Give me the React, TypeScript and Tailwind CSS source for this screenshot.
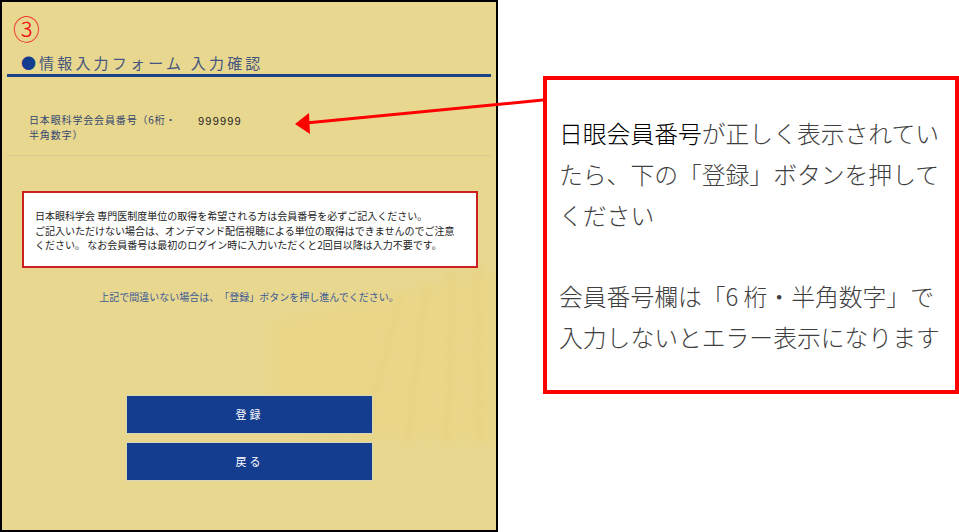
const jp = { fontFamily: '"Noto Sans CJK JP", sans-serif' }

const FormPanel = () => {
  return (
    <div className="relative h-[532px] w-[498px] shrink-0 overflow-hidden border-2 border-black bg-[#e8d78f] text-[10px]" style={jp}>
      {/* faint building photo behind the form */}
      <svg className="absolute inset-0 blur-[3px]" width="494" height="528" viewBox="0 0 494 528" fill="none">
        <path d="M270 320 L494 270 L494 440 L270 430 Z" fill="#e9d585" opacity="0.6" />
        <path d="M400 290 L360 440 M425 280 L405 440 M450 270 L445 440 M475 262 L478 440" stroke="#e8cf7c" strokeWidth="6" opacity="0.5" />
      </svg>

      <div className="relative flex h-full flex-col px-[5px]">
        <div className="ml-[6px] mt-[10px] h-[34px] text-[27px] font-light leading-[34px] text-[#f01010]">③</div>
        <h2 className="ml-[14px] mt-[6px] h-[22px] text-[15px] leading-[22px] tracking-[3.2px] text-[#44557f]">
          <span className="mr-[3px] tracking-normal text-[#143c8f]">●</span>情報入力フォーム 入力確認
        </h2>
        <div className="h-[3px] bg-[#1c4288]" />

        <div className="flex h-[79px] items-start border-b border-[#d9cc92] pl-[22px] pt-[36px]">
          <div className="w-[150px] text-[10px] leading-[14.5px] tracking-[0.85px] text-[#33466f]">
            日本眼科学会会員番号（6桁・
            <br />
            半角数字）
          </div>
          <div className="ml-[19px] mt-[1px] text-[11px] leading-[15px] tracking-[1.2px] text-[#222222]" style={{ fontFamily: '"Liberation Sans", sans-serif' }}>
            999999
          </div>
        </div>

        <div className="ml-[15px] mt-[35px] h-[77px] w-[456px] border-2 border-[#cc1f1f] bg-white pl-[11px] pt-[16px] text-[10px] leading-[14.5px] text-[#222222]">
          日本眼科学会 専門医制度単位の取得を希望される方は会員番号を必ずご記入ください。
          <br />
          ご記入いただけない場合は、オンデマンド配信視聴による単位の取得はできませんのでご注意
          <br />
          ください。 なお会員番号は最初のログイン時に入力いただくと2回目以降は入力不要です。
        </div>

        <p className="mt-[21px] text-center text-[10px] leading-[15px] text-[#3d5a94]">上記で間違いない場合は、「登録」ボタンを押し進んでください。</p>

        <div className="ml-[119px] mt-[91px] flex w-[247px] flex-col gap-[8px]">
          <button type="button" className="h-[39px] border border-[#d8d4b4] bg-[#143c8f] text-[11px] tracking-[3px] text-white">
            登録
          </button>
          <button type="button" className="h-[39px] border border-[#d8d4b4] bg-[#143c8f] text-[11px] tracking-[3px] text-white">
            戻る
          </button>
        </div>
      </div>
    </div>
  )
}

const NoteBox = () => {
  return (
    <div className="ml-[45px] mt-[76px] h-[318px] w-[416px] shrink-0 border-4 border-[#ff0000] bg-white pl-[12px] pt-[33px] text-[23.8px] font-light leading-[40.8px] text-[#3f3f3f]" style={jp}>
      <span className="text-black">日眼会員番号</span>が正しく表示されてい
      <br />
      たら、下の「登録」ボタンを押して
      <br />
      ください
      <br />
      <br />
      会員番号欄は「6 桁・半角数字」で
      <br />
      入力しないとエラー表示になります
    </div>
  )
}

export default function App() {
  return (
    <div className="relative flex h-[532px] w-[959px] overflow-hidden bg-white [text-spacing-trim:space-all]">
      <FormPanel />
      <NoteBox />
      <svg className="absolute left-0 top-0" width="959" height="532" viewBox="0 0 959 532" fill="none">
        <path d="M543 100 L306 123" stroke="#ff0000" strokeWidth="3" />
        <polygon points="295,124 309,113 310,134" fill="#ff0000" />
      </svg>
    </div>
  )
}
